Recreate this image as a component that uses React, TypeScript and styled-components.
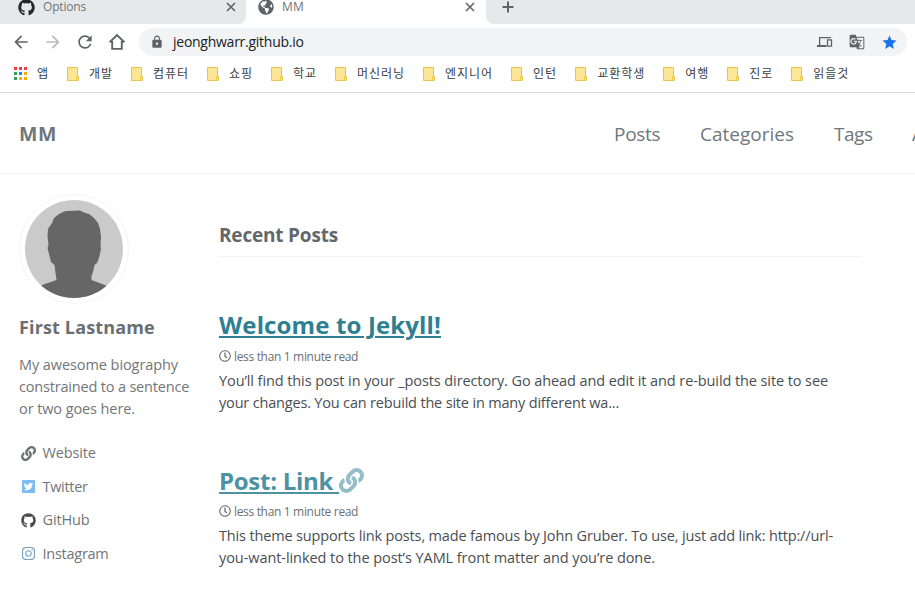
import React from "react";
import styled, { createGlobalStyle } from "styled-components";
import { FaGithub, FaGlobeAmericas, FaInstagram, FaLink, FaRegClock, FaTwitterSquare } from "react-icons/fa";
import { MdArrowBack, MdArrowForward, MdGTranslate, MdLock, MdRefresh, MdStar } from "react-icons/md";

const GlobalStyle = createGlobalStyle`
  * { box-sizing: border-box; }
  body {
    margin: 0;
    background: #fff;
    overflow: hidden;
    font-family: "Open Sans", "Noto Sans CJK KR", sans-serif;
  }
  svg { display: block; flex: none; }
`;

const Window = styled.div`
  width: 915px;
  height: 606px;
  overflow: hidden;
  background: #fff;
`;

/* Browser chrome */

const TabStrip = styled.div`
  display: flex;
  height: 24px;
`;

const Tab = styled.div<{ $active?: boolean }>`
  display: flex;
  align-items: center;
  width: ${(p) => (p.$active ? 240 : 246)}px;
  height: 24px;
  padding: 0 ${(p) => (p.$active ? 11 : 10)}px 10px ${(p) => (p.$active ? 12 : 18)}px;
  background: ${(p) => (p.$active ? "#fff" : "#e5e9ec")};
  border-bottom-right-radius: ${(p) => (p.$active ? 0 : 8)}px;
  color: #5f6368;
`;

const TabTitle = styled.span<{ $spacing: number }>`
  flex: 1;
  margin-left: 8px;
  font-size: 12px;
  line-height: 14px;
  letter-spacing: ${(p) => p.$spacing}px;
  color: #70757a;
`;

const TabRest = styled.div`
  flex: 1;
  padding: 0 0 0 15px;
  background: #e5e9ec;
  border-bottom-left-radius: 8px;
`;

const Toolbar = styled.div`
  display: flex;
  align-items: center;
  height: 36px;
  padding: 0 8px 0 12px;
  color: #5f6368;
`;

const ToolButton = styled.span<{ $disabled?: boolean }>`
  display: flex;
  justify-content: center;
  width: 18px;
  margin-right: 14px;
  color: ${(p) => (p.$disabled ? "#babcbe" : "#5f6368")};
`;

const AddressBar = styled.div`
  display: flex;
  flex: 1;
  align-items: center;
  height: 28px;
  margin-left: -1px;
  padding: 0 9px 0 11px;
  border-radius: 14px;
  background: #f1f3f4;
`;

const Address = styled.span`
  flex: 1;
  margin-left: 9px;
  font-size: 14px;
  line-height: 20px;
  letter-spacing: -0.26px;
  color: #202124;
`;

const AddressActions = styled.div`
  display: flex;
  align-items: center;
  gap: 16px;
`;

const Bookmarks = styled.div`
  display: flex;
  height: 33px;
  padding: 6px 0 0 14px;
  border-bottom: 1px solid #d9dbdd;
  font-family: "Noto Sans CJK KR", sans-serif;
  font-size: 12px;
  line-height: 14px;
  letter-spacing: 0.96px;
  color: #3c4043;
`;

const Bookmark = styled.span`
  display: flex;
  gap: 10px;
  margin-right: 18px;
  white-space: nowrap;

  svg { margin-top: 1px; }
`;

/* Blog page */

const Masthead = styled.header`
  display: flex;
  align-items: center;
  height: 81px;
  padding: 2px 0 0 19px;
  border-bottom: 1px solid #f2f3f3;
  font-size: 19px;
  line-height: 28px;
  color: #6f777d;
`;

const SiteTitle = styled.span`
  width: 595px;
  flex: none;
  font-size: 19.5px;
  font-weight: 700;
  letter-spacing: 0.7px;
`;

const NavLink = styled.span<{ $width: number; $spacing: number }>`
  flex: none;
  width: ${(p) => p.$width}px;
  letter-spacing: ${(p) => p.$spacing}px;
`;

const Columns = styled.div`
  display: grid;
  grid-template-columns: 200px 641px;
  padding-left: 19px;
`;

const Sidebar = styled.aside`
  padding-top: 20px;
  color: #727679;
`;

const AvatarFrame = styled.div`
  width: 110px;
  height: 110px;
  padding: 5px;
  border: 1px solid #f5f5f5;
  border-radius: 50%;
`;

const AuthorName = styled.h3`
  margin: 11px 0 0;
  font-size: 18px;
  font-weight: 700;
  line-height: 24px;
  letter-spacing: 0.14px;
  color: #6b6f72;
`;

const Bio = styled.div`
  margin-top: 15px;
`;

const Line = styled.div<{ $spacing: number }>`
  font-size: 14.5px;
  line-height: 22px;
  letter-spacing: ${(p) => p.$spacing}px;
  white-space: nowrap;
`;

const Links = styled.div`
  display: grid;
  gap: 11.6px;
  margin-top: 22px;
`;

const ProfileLink = styled.div<{ $color: string }>`
  display: flex;
  align-items: center;
  gap: 7px;
  padding-left: 1.5px;

  svg { color: ${(p) => p.$color}; }
`;

const Main = styled.main`
  padding-top: 47px;
`;

const SectionTitle = styled.h3`
  height: 36px;
  margin: 0 0 51px;
  border-bottom: 1px solid #f2f3f3;
  font-size: 19px;
  line-height: 28px;
  letter-spacing: -0.19px;
  color: #63676a;
`;

const Post = styled.article`
  height: 155px;
  color: #494e52;
`;

const PostTitle = styled.h2<{ $color: string; $spacing: number; $drop: number }>`
  display: flex;
  align-items: center;
  height: 34px;
  margin: 0;
  padding-top: ${(p) => p.$drop}px;
  font-size: 24px;
  line-height: 34px;
  letter-spacing: ${(p) => p.$spacing}px;
  color: ${(p) => p.$color};

  span {
    white-space: pre;
    text-decoration: underline;
    text-decoration-thickness: 2px;
    text-underline-offset: 2px;
  }

  svg { margin-top: -2px; opacity: 0.6; }
`;

const Meta = styled.div`
  display: flex;
  align-items: center;
  gap: 3px;
  height: 18px;
  margin: 5px 0;
  font-size: 12px;
  letter-spacing: -0.33px;
  color: #6b6f72;
`;

const AppsIcon = () => (
  <svg width="13" height="13" viewBox="0 0 13 13">
    {["#f03c3c", "#f03c3c", "#f03c3c", "#34a060", "#1a85ee", "#fbaf08", "#34a060", "#fbaf08", "#fbaf08"].map((c, i) => (
      <rect key={i} x={(i % 3) * 5} y={Math.floor(i / 3) * 5} width="3" height="3" fill={c} />
    ))}
  </svg>
);

const FolderIcon = () => (
  <svg width="12" height="14" viewBox="0 0 12 14">
    <path d="M.5.5h10v13H.5z" fill="#ffe694" stroke="#eac54b" />
    <path d="M9.5 9.5h2v4h-2z" fill="#ffe694" stroke="#eac54b" />
  </svg>
);

const HomeIcon = () => (
  <svg width="18" height="18" viewBox="0 0 18 18" fill="none" stroke="currentColor" strokeWidth="1.9">
    <path d="M1.6 9.3 9 2l7.4 7.3M4.2 8v7.9h9.6V8" />
  </svg>
);

const DevicesIcon = () => (
  <svg width="16" height="12" viewBox="0 0 16 12" fill="none" stroke="#5f6368">
    <path d="M2.6 9V1.6H14M10.5 3.8h4v6.4h-4z" strokeWidth="1.3" />
    <path d="M0 10h9.5" strokeWidth="2" />
  </svg>
);

const PlusIcon = () => (
  <svg width="14" height="14" viewBox="0 0 14 14" stroke="#5f6368" strokeWidth="2">
    <path d="M1.5 7h11M7 1.5v11" />
  </svg>
);

const CloseIcon = () => (
  <svg width="10" height="10" viewBox="0 0 10 10" stroke="#5f6368" strokeWidth="1.6">
    <path d="M1 1l8 8M9 1L1 9" />
  </svg>
);

const Avatar = () => (
  <svg width="98" height="98" viewBox="0 0 98 98">
    <defs>
      <clipPath id="avatar-circle">
        <circle cx="49" cy="49" r="49" />
      </clipPath>
    </defs>
    <g clipPath="url(#avatar-circle)">
      <path d="M0 0h98v98H0z" fill="#cacaca" />
      <path
        fill="#666"
        d="M41 11 55 10.500 59 12.500 64 14 69 18 73 23 75 29 76 37 75.500 46 76 49 74 58 72 63 69.500 65 68 72 66.500 76 66.500 80 81 85.500 88 91V98H9V91L17 85 31.500 80 30.500 73 29.500 65 26 62 24 54 22.500 48 23.500 45 22.500 36 23 29 27 23 29 18 34 14 38 12z"
      />
    </g>
  </svg>
);

const folders = ["개발", "컴퓨터", "쇼핑", "학교", "머신러닝", "엔지니어", "인턴", "교환학생", "여행", "진로", "읽을것"];

const profileLinks = [
  { label: "Website", icon: <FaLink size={15} />, color: "#6b6f72", spacing: -0.14 },
  { label: "Twitter", icon: <FaTwitterSquare size={15} />, color: "#7bbdf2", spacing: -0.3 },
  { label: "GitHub", icon: <FaGithub size={15} />, color: "#4b4b4b", spacing: -0.14 },
  { label: "Instagram", icon: <FaInstagram size={15} />, color: "#79a3c2", spacing: -0.26 },
];

const posts = [
  {
    title: "Welcome to Jekyll!",
    color: "#2f7f93",
    spacing: 0.135,
    link: false,
    lines: [
      { text: "You’ll find this post in your _posts directory. Go ahead and edit it and re-build the site to see", spacing: -0.094 },
      { text: "your changes. You can rebuild the site in many different wa...", spacing: -0.18 },
    ],
  },
  {
    title: "Post: Link ",
    color: "#4d92a3",
    spacing: -0.284,
    link: true,
    lines: [
      { text: "This theme supports link posts, made famous by John Gruber. To use, just add link: http://url-", spacing: -0.153 },
      { text: "you-want-linked to the post’s YAML front matter and you’re done.", spacing: -0.07 },
    ],
  },
];

export default function App() {
  return (
    <Window>
      <GlobalStyle />
      <TabStrip>
        <Tab>
          <FaGithub size={17} color="#24292e" />
          <TabTitle $spacing={-0.18}>Options</TabTitle>
          <CloseIcon />
        </Tab>
        <Tab $active>
          <FaGlobeAmericas size={16} />
          <TabTitle $spacing={0.2}>MM</TabTitle>
          <CloseIcon />
        </Tab>
        <TabRest>
          <PlusIcon />
        </TabRest>
      </TabStrip>
      <Toolbar>
        <ToolButton><MdArrowBack size={20} /></ToolButton>
        <ToolButton $disabled><MdArrowForward size={20} /></ToolButton>
        <ToolButton><MdRefresh size={20} /></ToolButton>
        <ToolButton><HomeIcon /></ToolButton>
        <AddressBar>
          <MdLock size={14} />
          <Address>jeonghwarr.github.io</Address>
          <AddressActions>
            <DevicesIcon />
            <MdGTranslate size={16} />
            <MdStar size={17} color="#1a73e8" />
          </AddressActions>
        </AddressBar>
      </Toolbar>
      <Bookmarks>
        <Bookmark>
          <AppsIcon />앱
        </Bookmark>
        {folders.map((name) => (
          <Bookmark key={name}>
            <FolderIcon />
            {name}
          </Bookmark>
        ))}
      </Bookmarks>
      <Masthead>
        <SiteTitle>MM</SiteTitle>
        <NavLink $width={86} $spacing={-0.3}>Posts</NavLink>
        <NavLink $width={134} $spacing={0}>Categories</NavLink>
        <NavLink $width={78} $spacing={-0.45}>Tags</NavLink>
        <NavLink $width={60} $spacing={0}>About</NavLink>
      </Masthead>
      <Columns>
        <Sidebar>
          <AvatarFrame>
            <Avatar />
          </AvatarFrame>
          <AuthorName>First Lastname</AuthorName>
          <Bio>
            <Line $spacing={-0.08}>My awesome biography</Line>
            <Line $spacing={-0.18}>constrained to a sentence</Line>
            <Line $spacing={-0.096}>or two goes here.</Line>
          </Bio>
          <Links>
            {profileLinks.map((l) => (
              <ProfileLink key={l.label} $color={l.color}>
                {l.icon}
                <Line $spacing={l.spacing}>{l.label}</Line>
              </ProfileLink>
            ))}
          </Links>
        </Sidebar>
        <Main>
          <SectionTitle>Recent Posts</SectionTitle>
          {posts.map((p) => (
            <Post key={p.title}>
              <PostTitle $color={p.color} $spacing={p.spacing} $drop={p.link ? 2 : 0}>
                <span>{p.title}</span>
                {p.link && <FaLink size={25} />}
              </PostTitle>
              <Meta>
                <FaRegClock size={12} />
                less than 1 minute read
              </Meta>
              {p.lines.map((l) => (
                <Line key={l.text} $spacing={l.spacing}>{l.text}</Line>
              ))}
            </Post>
          ))}
        </Main>
      </Columns>
    </Window>
  );
}
